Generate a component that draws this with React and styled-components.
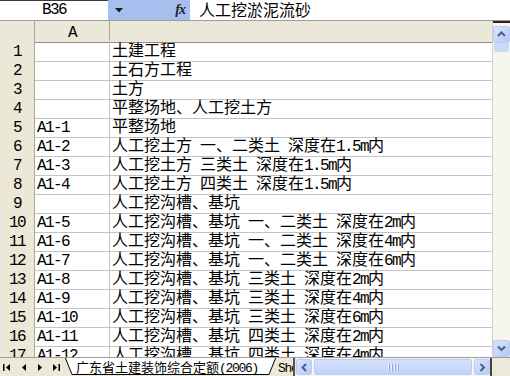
import React from "react";
import styled, { createGlobalStyle } from "styled-components";

const GlobalStyle = createGlobalStyle`
  html, body { margin: 0; padding: 0; background: #fff; }
  body { font-family: "Noto Sans CJK SC", "Liberation Sans", sans-serif; }
`;

const Window = styled.div`
  width: 510px;
  height: 376px;
  display: flex;
  flex-direction: column;
  overflow: hidden;
  background: #fff;
  color: #000;
  font-size: 16px;
`;

// formula bar
const FormulaBar = styled.div`
  display: flex;
  border-bottom: 1px solid #9d9d9d;
  box-sizing: border-box;
  height: 21px;
  flex-shrink: 0;
`;

const NameBox = styled.div`
  width: 108px;
  display: flex;
  align-items: center;
  justify-content: center;
  font-size: 16px;
  line-height: 19px;
  box-shadow: inset 0 1px 0 #3a3a3a;
`;

const BlueZone = styled.div`
  width: ${({ w }) => w}px;
  background: #a6bfef;
  display: flex;
  align-items: center;
  justify-content: ${({ end }) => (end ? "flex-end" : "center")};
  padding-right: ${({ end }) => (end ? "5px" : "0")};
  box-sizing: border-box;
`;

const Fx = styled.span`
  font-family: "Liberation Serif", serif;
  font-style: italic;
  font-weight: bold;
  font-size: 14px;
  color: #222;
  letter-spacing: -1px;
`;

const FormulaText = styled.div`
  flex: 1;
  padding-left: 9px;
  line-height: 19px;
  white-space: pre;
`;

// sheet
const Body = styled.div`
  flex: 1;
  min-height: 0;
  display: flex;
`;

const Sheet = styled.div`
  flex: 1;
  overflow: hidden;
`;

const Row = styled.div`
  display: grid;
  grid-template-columns: 35px 75px 1fr;
  height: 19px;
`;

const Cell = styled.div`
  box-sizing: border-box;
  border-right: 1px solid #c4c4c4;
  border-bottom: 1px solid #c4c4c4;
  line-height: 18px;
  white-space: pre;
  padding-left: 2px;
  &:last-child { border-right: none; }
`;

const HeadCell = styled(Cell)`
  background: #ebe8d8;
  text-align: center;
  padding-left: 0;
  border-right-color: #aca899;
  border-bottom-color: ${({ top }) => (top ? "#8f8c80" : "#c4c4c4")};
`;

const Half = styled.span`
  font-family: "Liberation Mono", monospace;
  letter-spacing: -0.1em;
`;

function Mixed({ text }) {
  return text
    .split(/([\x20-\x7e]+)/)
    .filter(Boolean)
    .map((part, i) =>
      /^[\x20-\x7e]+$/.test(part) ? <Half key={i}>{part}</Half> : <span key={i}>{part}</span>
    );
}

// vertical scrollbar
const VScroll = styled.div`
  width: 18px;
  display: flex;
  flex-direction: column;
  background: #f6f5ee;
  border-left: 1px solid #d6d3c4;
  box-sizing: border-box;
`;

const SplitBox = styled.div`
  height: 3px;
  border-top: 2px solid #222;
  background: #f6f5ee;
`;

const ScrollBtn = styled.div`
  width: ${({ w }) => w || 17}px;
  height: ${({ h }) => h || 17}px;
  box-sizing: border-box;
  border: 1px solid #bccdf5;
  border-radius: 2px;
  background: linear-gradient(135deg, #d9e4fd, #b6c9f7);
  display: flex;
  align-items: center;
  justify-content: center;
  flex-shrink: 0;
`;

const VThumb = styled.div`
  height: 9px;
  margin: 0 1px;
  background: #c9d8fb;
  border-radius: 0 0 2px 2px;
`;

const Track = styled.div`
  flex: 1;
`;

// tab bar
const TabBar = styled.div`
  height: 18px;
  flex-shrink: 0;
  display: flex;
  background: #ece9d8;
  border-top: 1px solid #9d9d9d;
`;

const NavBtn = styled.div`
  width: 16px;
  display: flex;
  align-items: center;
  justify-content: center;
`;

const Tab = styled.div`
  position: relative;
  width: ${({ w }) => w}px;
  margin-left: ${({ ml }) => ml || 0}px;
  font-size: 13px;
  line-height: 17px;
  white-space: pre;
  overflow: hidden;
  padding-left: ${({ pl }) => pl}px;
  box-sizing: border-box;
  z-index: ${({ active }) => (active ? 2 : 1)};
`;

const TabShape = styled.svg`
  position: absolute;
  left: 0;
  top: 0;
  z-index: -1;
`;

const Divider = styled.div`
  width: 2px;
  background: #555;
  margin-right: 1px;
`;

const HScroll = styled.div`
  flex: 1;
  display: flex;
  align-items: center;
  background: #f6f5ee;
  gap: 2px;
`;

const HThumb = styled.div`
  flex: 1;
  height: 16px;
  box-sizing: border-box;
  border: 1px solid #bccdf5;
  border-radius: 2px;
  background: linear-gradient(180deg, #d5e1fc, #c2d3fa);
  display: flex;
  align-items: center;
  justify-content: center;
  gap: 2px;
`;

const Grip = styled.span`
  width: 1px;
  height: 7px;
  background: #eef3fe;
  box-shadow: 1px 0 0 #8ea6dc;
`;

const Corner = styled.div`
  width: 18px;
  border-left: 2px solid #444;
  background: #ece9d8;
`;

const Chevron = ({ dir }) => {
  const paths = {
    up: "M2 7 L5.5 3.5 L9 7",
    down: "M2 3.5 L5.5 7 L9 3.5",
    left: "M7 2 L3.5 5.5 L7 9",
    right: "M3.5 2 L7 5.5 L3.5 9",
  };
  return (
    <svg width="11" height="11" viewBox="0 0 11 11">
      <path d={paths[dir]} fill="none" stroke="#4d6185" strokeWidth="2" />
    </svg>
  );
};

const NavIcon = ({ kind }) => (
  <svg width="12" height="9" viewBox="0 0 12 9">
    {kind === "first" && (
      <>
        <rect x="1" y="1" width="1.5" height="7" fill="#000" />
        <path d="M8 1 L4 4.5 L8 8 Z" fill="#000" />
      </>
    )}
    {kind === "prev" && <path d="M8 1 L4 4.5 L8 8 Z" fill="#000" />}
    {kind === "next" && <path d="M4 1 L8 4.5 L4 8 Z" fill="#000" />}
    {kind === "last" && (
      <>
        <path d="M3 1 L7 4.5 L3 8 Z" fill="#000" />
        <rect x="8.5" y="1" width="1.5" height="7" fill="#000" />
      </>
    )}
  </svg>
);

const rows = [
  ["", "土建工程"],
  ["", "土石方工程"],
  ["", "土方"],
  ["", "平整场地、人工挖土方"],
  ["A1-1", "平整场地"],
  ["A1-2", "人工挖土方 一、二类土 深度在1.5m内"],
  ["A1-3", "人工挖土方 三类土 深度在1.5m内"],
  ["A1-4", "人工挖土方 四类土 深度在1.5m内"],
  ["", "人工挖沟槽、基坑"],
  ["A1-5", "人工挖沟槽、基坑 一、二类土 深度在2m内"],
  ["A1-6", "人工挖沟槽、基坑 一、二类土 深度在4m内"],
  ["A1-7", "人工挖沟槽、基坑 一、二类土 深度在6m内"],
  ["A1-8", "人工挖沟槽、基坑 三类土 深度在2m内"],
  ["A1-9", "人工挖沟槽、基坑 三类土 深度在4m内"],
  ["A1-10", "人工挖沟槽、基坑 三类土 深度在6m内"],
  ["A1-11", "人工挖沟槽、基坑 四类土 深度在2m内"],
  ["A1-12", "人工挖沟槽、基坑 四类土 深度在4m内"],
];

export default function App() {
  return (
    <>
      <GlobalStyle />
      <Window>
        <FormulaBar>
          <NameBox>
            <Mixed text="B36" />
          </NameBox>
          <BlueZone w={22}>
            <svg width="8" height="5" viewBox="0 0 8 5">
              <path d="M0 0 H8 L4 4.5 Z" fill="#1a1a1a" />
            </svg>
          </BlueZone>
          <BlueZone w={60} end>
            <Fx>fx</Fx>
          </BlueZone>
          <FormulaText>人工挖淤泥流砂</FormulaText>
        </FormulaBar>

        <Body>
          <Sheet>
            <Row>
              <HeadCell top />
              <HeadCell top>
                <Half>A</Half>
              </HeadCell>
              <HeadCell top />
            </Row>
            {rows.map(([code, name], i) => (
              <Row key={i}>
                <HeadCell>
                  <Mixed text={String(i + 1)} />
                </HeadCell>
                <Cell>
                  <Mixed text={code} />
                </Cell>
                <Cell>
                  <Mixed text={name} />
                </Cell>
              </Row>
            ))}
          </Sheet>
          <VScroll>
            <SplitBox />
            <ScrollBtn>
              <Chevron dir="up" />
            </ScrollBtn>
            <VThumb />
            <Track />
            <ScrollBtn>
              <Chevron dir="down" />
            </ScrollBtn>
          </VScroll>
        </Body>

        <TabBar>
          <NavBtn><NavIcon kind="first" /></NavBtn>
          <NavBtn><NavIcon kind="prev" /></NavBtn>
          <NavBtn><NavIcon kind="next" /></NavBtn>
          <NavBtn><NavIcon kind="last" /></NavBtn>
          <Tab active w={213} pl={12}>
            <TabShape width="213" height="18" viewBox="0 0 213 18">
              <path d="M1 -1 L8 16.5 L205 16.5 L212 -1 Z" fill="#fff" stroke="#000" strokeWidth="1" />
            </TabShape>
            <Mixed text="广东省土建装饰综合定额(2006)" />
          </Tab>
          <Tab w={17} ml={-1} pl={2}>
            <Mixed text="Sheet2" />
          </Tab>
          <Divider />
          <HScroll>
            <ScrollBtn w={16} h={16}>
              <Chevron dir="left" />
            </ScrollBtn>
            <HThumb>
              <Grip />
              <Grip />
              <Grip />
              <Grip />
            </HThumb>
            <ScrollBtn w={16} h={16}>
              <Chevron dir="right" />
            </ScrollBtn>
          </HScroll>
          <Corner />
        </TabBar>
      </Window>
    </>
  );
}
